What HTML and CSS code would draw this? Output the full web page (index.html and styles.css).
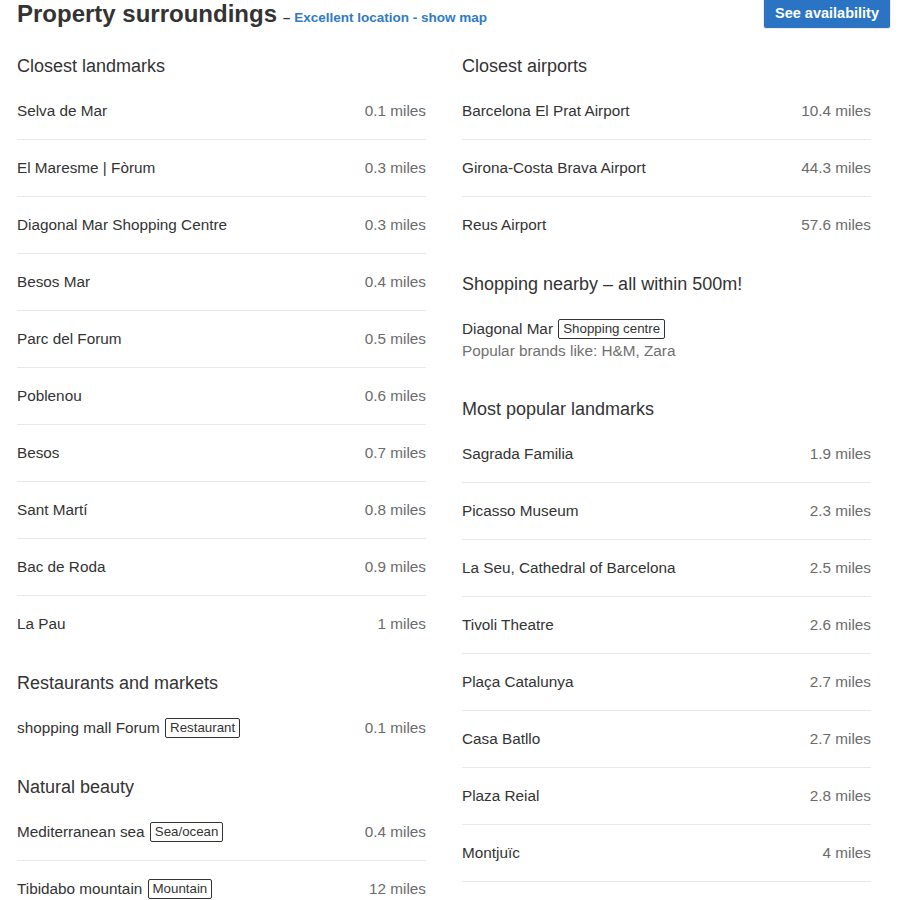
FILE: index.html
```html
<!DOCTYPE html>
<html lang="en">
<head>
<meta charset="utf-8">
<title>Property surroundings</title>
<link rel="stylesheet" href="styles.css">
</head>
<body>
<div class="page">
  <header class="top">
    <div class="title-wrap">
      <h1 class="title">Property surroundings</h1>
      <span class="dash">–</span>
      <a class="map-link" href="#">Excellent location - show map</a>
    </div>
    <button class="avail-btn">See availability</button>
  </header>

  <div class="cols">
    <div class="col">
      <h2 class="sec-title">Closest landmarks</h2>
      <ul class="list">
        <li class="row"><span class="name">Selva de Mar</span><span class="dist">0.1 miles</span></li>
        <li class="row"><span class="name">El Maresme | Fòrum</span><span class="dist">0.3 miles</span></li>
        <li class="row"><span class="name">Diagonal Mar Shopping Centre</span><span class="dist">0.3 miles</span></li>
        <li class="row"><span class="name">Besos Mar</span><span class="dist">0.4 miles</span></li>
        <li class="row"><span class="name">Parc del Forum</span><span class="dist">0.5 miles</span></li>
        <li class="row"><span class="name">Poblenou</span><span class="dist">0.6 miles</span></li>
        <li class="row"><span class="name">Besos</span><span class="dist">0.7 miles</span></li>
        <li class="row"><span class="name">Sant Martí</span><span class="dist">0.8 miles</span></li>
        <li class="row"><span class="name">Bac de Roda</span><span class="dist">0.9 miles</span></li>
        <li class="row"><span class="name">La Pau</span><span class="dist">1 miles</span></li>
      </ul>

      <h2 class="sec-title">Restaurants and markets</h2>
      <ul class="list">
        <li class="row"><span class="name">shopping mall Forum <span class="badge">Restaurant</span></span><span class="dist">0.1 miles</span></li>
      </ul>

      <h2 class="sec-title">Natural beauty</h2>
      <ul class="list">
        <li class="row"><span class="name">Mediterranean sea <span class="badge">Sea/ocean</span></span><span class="dist">0.4 miles</span></li>
        <li class="row"><span class="name">Tibidabo mountain <span class="badge">Mountain</span></span><span class="dist">12 miles</span></li>
      </ul>
    </div>

    <div class="col">
      <h2 class="sec-title">Closest airports</h2>
      <ul class="list">
        <li class="row"><span class="name">Barcelona El Prat Airport</span><span class="dist">10.4 miles</span></li>
        <li class="row"><span class="name">Girona-Costa Brava Airport</span><span class="dist">44.3 miles</span></li>
        <li class="row"><span class="name">Reus Airport</span><span class="dist">57.6 miles</span></li>
      </ul>

      <h2 class="sec-title">Shopping nearby – all within 500m!</h2>
      <div class="shop">
        <div class="shop-name">Diagonal Mar <span class="badge">Shopping centre</span></div>
        <div class="shop-note">Popular brands like: H&amp;M, Zara</div>
      </div>

      <h2 class="sec-title">Most popular landmarks</h2>
      <ul class="list list-open">
        <li class="row"><span class="name">Sagrada Familia</span><span class="dist">1.9 miles</span></li>
        <li class="row"><span class="name">Picasso Museum</span><span class="dist">2.3 miles</span></li>
        <li class="row"><span class="name">La Seu, Cathedral of Barcelona</span><span class="dist">2.5 miles</span></li>
        <li class="row"><span class="name">Tivoli Theatre</span><span class="dist">2.6 miles</span></li>
        <li class="row"><span class="name">Plaça Catalunya</span><span class="dist">2.7 miles</span></li>
        <li class="row"><span class="name">Casa Batllo</span><span class="dist">2.7 miles</span></li>
        <li class="row"><span class="name">Plaza Reial</span><span class="dist">2.8 miles</span></li>
        <li class="row"><span class="name">Montjuïc</span><span class="dist">4 miles</span></li>
      </ul>
    </div>
  </div>
</div>
</body>
</html>
```

FILE: styles.css
```css
* { box-sizing: border-box; }

body {
  margin: 0;
  background: #ffffff;
  font-family: "Liberation Sans", Arial, sans-serif;
  color: #333333;
}

.page {
  padding: 0 27px 0 17px;
}

.top {
  display: flex;
  justify-content: space-between;
  align-items: flex-start;
  height: 28px;
}

.title-wrap {
  display: flex;
  align-items: baseline;
}

.title {
  margin: 0;
  font-size: 24px;
  line-height: 28px;
  font-weight: bold;
  color: #333333;
}

.dash {
  margin-left: 6px;
  font-size: 13px;
  font-weight: bold;
  color: #333333;
}

.map-link {
  margin-left: 4px;
  font-size: 13.5px;
  font-weight: bold;
  color: #2f7bc4;
  text-decoration: none;
}

.avail-btn {
  height: 28px;
  padding: 0 11px 2px;
  border: none;
  border-radius: 0 0 2px 2px;
  background: #2b74c4;
  color: #ffffff;
  font-family: "Liberation Sans", Arial, sans-serif;
  font-size: 14.5px;
  font-weight: bold;
  box-shadow: 0 0 0 1px #f3e9dc;
}

.cols {
  display: grid;
  grid-template-columns: 409px 409px;
  column-gap: 36px;
  margin-top: 7px;
}

.sec-title {
  margin: 20px 0 6px;
  font-size: 18px;
  line-height: 22px;
  font-weight: normal;
  color: #333333;
}

.list {
  list-style: none;
  margin: 0;
  padding: 0;
}

.row {
  display: flex;
  justify-content: space-between;
  align-items: center;
  padding: 18px 0;
  line-height: 20px;
  font-size: 15.3px;
  border-bottom: 1px solid #e9e9e9;
}

.row:last-child {
  border-bottom: none;
}

.list-open .row:last-child {
  border-bottom: 1px solid #e9e9e9;
}

.dist {
  color: #6b6b6b;
}

.badge {
  display: inline-block;
  margin-left: 1px;
  padding: 0 4px;
  border: 1px solid #333333;
  border-radius: 2px;
  font-size: 13.3px;
  line-height: 18px;
  vertical-align: 1px;
  color: #333333;
}

.shop {
  padding: 18px 0 17px;
  font-size: 15.3px;
}

.shop-name {
  line-height: 20px;
}

.shop-note {
  margin-top: 2px;
  line-height: 20px;
  color: #707070;
}
```
